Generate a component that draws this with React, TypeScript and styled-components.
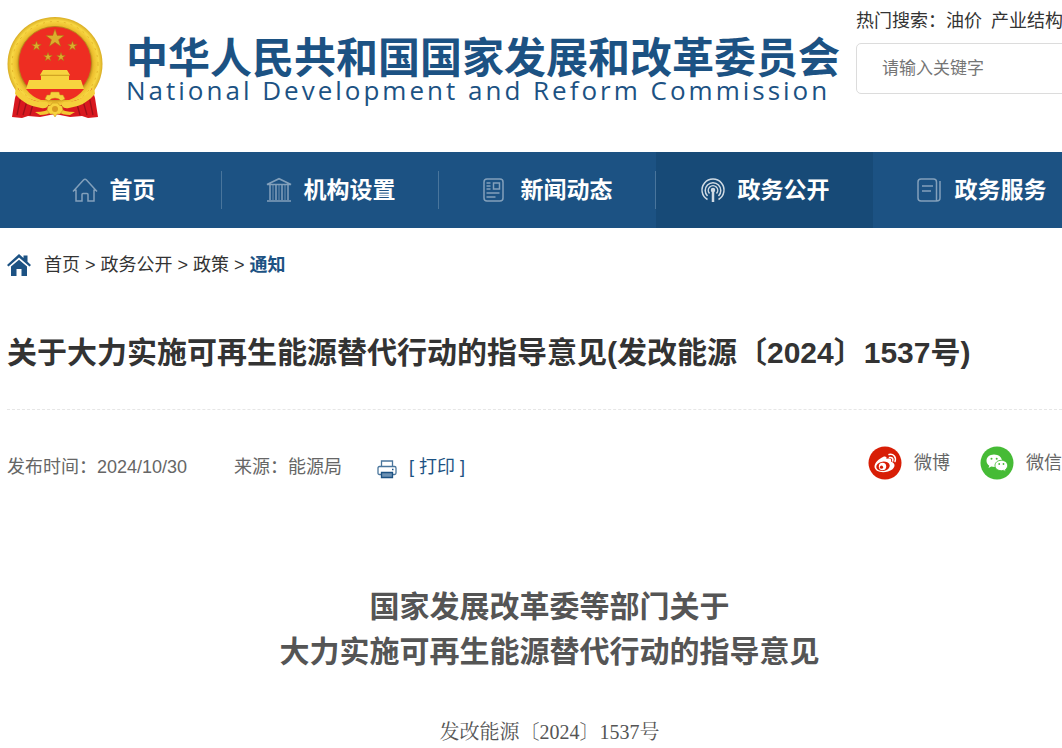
import React from 'react';
import styled, { createGlobalStyle } from 'styled-components';

const BLUE = '#1c5283';
const SANS = '"Liberation Sans", "Noto Sans CJK SC", sans-serif';

const GlobalStyle = createGlobalStyle`
  * { box-sizing: border-box; }
  body {
    margin: 0;
    background: #fff;
    color: #333;
    font: 18px/26px ${SANS};
    overflow-x: hidden;
  }
  a { color: inherit; text-decoration: none; }
  h1, h2, p { margin: 0; }
`;

const Page = styled.div`
  overflow: hidden;
`;

const Header = styled.header`
  display: flex;
  height: 152px;
  padding-left: 7px;
`;

const Brand = styled.a`
  display: flex;
  flex: none;
  align-items: flex-start;
  gap: 23px;
  width: 849px;
  padding-top: 16px;
  color: ${BLUE};
`;

const BrandText = styled.span`
  display: flex;
  flex-direction: column;
  padding-top: 16px;
  white-space: nowrap;
`;

const BrandName = styled.span`
  font: 700 42px/46px "Noto Sans CJK SC", sans-serif;
`;

const BrandEnglish = styled.span`
  font: 26px/24px "Open Sans", sans-serif;
  letter-spacing: 3px;
`;

const Search = styled.form`
  flex: none;
  width: 420px;
  padding-top: 8px;
`;

const HotWords = styled.div`
  display: flex;
  gap: 9px;
  white-space: nowrap;
`;

const SearchInput = styled.input`
  display: block;
  width: 100%;
  height: 51px;
  margin-top: 9px;
  padding: 0 25px;
  border: 1px solid #dcdcdc;
  border-radius: 5px;
  font: 17px/24px ${SANS};
  &::placeholder { color: #757575; opacity: 1; }
`;

const Nav = styled.nav`
  display: flex;
  height: 76px;
  padding-left: 5px;
  background: ${BLUE};
`;

const NavItem = styled.a<{ $active?: boolean }>`
  position: relative;
  display: flex;
  flex: none;
  align-items: center;
  justify-content: center;
  gap: 12px;
  width: 217px;
  background: ${(p) => (p.$active ? '#174a77' : 'transparent')};
  color: #fff;
  font-size: 23px;
  font-weight: 700;
  white-space: nowrap;
  svg { opacity: ${(p) => (p.$active ? 0.8 : 0.45)}; }
  &:not(:last-child)::after {
    content: '';
    position: absolute;
    top: 19px;
    right: 0;
    width: 1px;
    height: 38px;
    background: ${(p) => (p.$active ? 'transparent' : '#49759c')};
  }
`;

const Main = styled.main`
  padding-left: 7px;
`;

const Breadcrumb = styled.nav`
  display: flex;
  align-items: center;
  gap: 5px;
  padding-top: 24px;
  white-space: nowrap;
  svg { margin-right: 8px; }
`;

const Current = styled.a`
  color: ${BLUE};
  font-weight: 700;
`;

const Title = styled.h1`
  margin-top: 51px;
  padding-bottom: 32px;
  border-bottom: 1px dashed #e6e6e6;
  font-size: 30px;
  line-height: 48px;
  white-space: nowrap;
`;

const Meta = styled.div`
  display: flex;
  align-items: center;
  padding-top: 36px;
  color: #666;
  white-space: nowrap;
`;

const Published = styled.span`
  width: 227px;
  padding-top: 8px;
`;

const Source = styled.span`
  width: 143px;
  padding-top: 8px;
`;

const PrintButton = styled.button`
  display: flex;
  align-items: center;
  gap: 12px;
  padding: 8px 0 0;
  border: 0;
  background: none;
  color: ${BLUE};
  font: inherit;
  svg { margin-top: 4px; }
`;

const Share = styled.div`
  display: flex;
  gap: 30px;
  margin-left: auto;
`;

const ShareLink = styled.a`
  display: flex;
  align-items: center;
  gap: 12px;
  height: 34px;
`;

const Article = styled.article`
  padding-top: 104px;
  margin-left: 30px;
  text-align: center;
`;

const ArticleTitle = styled.h2`
  color: #555;
  font-size: 30px;
  line-height: 45px;
`;

const DocNumber = styled.p`
  margin-top: 44px;
  color: #555;
  font: 20px/28px "Liberation Serif", "Noto Serif CJK SC", "Noto Sans CJK SC", serif;
`;

const star = (cx: number, cy: number, r: number) =>
  Array.from({ length: 10 }, (_, i) => {
    const a = (Math.PI / 5) * i - Math.PI / 2;
    const k = i % 2 ? r * 0.4 : r;
    return `${(cx + k * Math.cos(a)).toFixed(1)},${(cy + k * Math.sin(a)).toFixed(1)}`;
  }).join(' ');

const Emblem = () => (
  <svg width="96" height="103" viewBox="0 0 96 103" aria-hidden="true">
    <defs>
      <radialGradient id="gold" cx="50%" cy="50%" r="50%">
        <stop offset="0.76" stopColor="#c2931c" />
        <stop offset="0.82" stopColor="#edbf2e" />
        <stop offset="0.92" stopColor="#f8d844" />
        <stop offset="1" stopColor="#d9ad24" />
      </radialGradient>
    </defs>
    <ellipse cx="48" cy="48" rx="47.500" ry="47" fill="url(#gold)" />
    <ellipse cx="48" cy="48" rx="43" ry="42.500" fill="none" stroke="#dfae26" strokeWidth="0.800" strokeDasharray="2 5" />
    <circle cx="48" cy="47" r="36.500" fill="#ee2d22" stroke="#b5851b" strokeWidth="0.800" />
    <g fill="#dcae2c" stroke="#a87513" strokeWidth="0.500">
      <polygon points={star(48, 22.5, 9.5)} />
      <polygon points={star(29.5, 30, 5)} />
      <polygon points={star(65.5, 30, 5)} />
      <polygon points={star(41, 41, 4.6)} />
      <polygon points={star(54, 41, 4.6)} />
    </g>
    <path d="M36 54h24l3 5H33zM34 59h28v5H34zM22 64h52l3 9H19z" fill="#f7d33f" />
    <path d="M33 59.300h30" stroke="#c99a1d" />
    <path d="M11 72q3 8 12 11l25 8 25-8q9-3 12-11l3 10 3 19-10 1-6-2-12 1-15-3-15 3-12-1-6 2-10-1 3-19z" fill="#d8181f" />
    <path d="M14 80l-4 19M20 85l-4 14M26 88l-3 11M82 80l4 19M76 85l4 14M70 88l3 11" stroke="#9e1018" strokeWidth="1.300" />
    <path d="M19 73h58q-6 8-15 11H34q-9-3-15-11z" fill="#ee2d22" />
    <path d="M9 70q10 15 27 16 6-1 5 4-2 3-7 2Q18 90 8 78zM87 70q-10 15-27 16-6-1-5 4 2 3 7 2 16-2 26-14z" fill="#f5cf3b" />
    <path d="M28 96q12 0 15-4h10q3 4 15 4l-5 3q-8 0-11-3h-8q-3 3-11 3z" fill="#f2c733" />
    <path d="M38 83l2-4h3l1-3h8l1 3h3l2 4-4 2q-2-3-6-3t-6 3z" fill="#f7d23d" stroke="#c28f18" strokeWidth="0.500" />
    <path d="M40 94l1-4 3-1 1-2h6l1 2 3 1 1 4-3 4h-3l-2 3-2-3h-3z" fill="#f7d23d" stroke="#c28f18" strokeWidth="0.500" />
    <circle cx="48" cy="93" r="3" fill="#d99c22" />
  </svg>
);

const line = { fill: 'none', stroke: 'currentColor', strokeWidth: 1.5 } as const;

const HomeOutline = () => (
  <svg width="26" height="26" viewBox="0 0 26 26" {...line} aria-hidden="true">
    <path d="M1 14.500 11.500 3Q13 1.500 14.500 3L25 14.500M4 12.500V24h6v-6.500q0-1 1-1h4q1 0 1 1V24h6V12.500" />
  </svg>
);

const Institution = () => (
  <svg width="26" height="26" viewBox="0 0 26 26" {...line} aria-hidden="true">
    <path d="M1 7.500 13 1.700l12 5.800zM4 8v15M10 8v15M16 8v15M22 8v15M1 24h24" />
    <path d="M7 8v15M13 8v15M19 8v15" strokeWidth="0.800" />
  </svg>
);

const News = () => (
  <svg width="26" height="26" viewBox="0 0 26 26" {...line} aria-hidden="true">
    <rect x="1" y="2" width="19" height="22" rx="3" />
    <path d="M3.500 6h4M3.500 9h4M3.500 12h4M3.500 16h13M3.500 20h9M10.500 6h6v6h-6z" />
  </svg>
);

const Broadcast = () => (
  <svg width="26" height="26" viewBox="0 0 26 26" {...line} aria-hidden="true">
    <path d="M7.500 22.500a11 11 0 1 1 11 0M7.500 19a7.800 7.800 0 1 1 11 0M9.500 16.500a4.700 4.700 0 1 1 7 0" />
    <circle cx="13" cy="13" r="1.500" fill="currentColor" />
    <path d="M13 13v12" strokeWidth="2.500" />
  </svg>
);

const Service = () => (
  <svg width="26" height="26" viewBox="0 0 26 26" {...line} aria-hidden="true">
    <path d="M19.500 24H4q-3 0-3-3V5q0-3 3-3h12.500q3 0 3 3zM19.500 24q3.500 0 3.500-3V4M5 9h11M5 14h9" />
  </svg>
);

const HomeSolid = () => (
  <svg width="24" height="22" viewBox="0 0 24 22" fill={BLUE} aria-hidden="true">
    <path d="M0 11 12 0l4.500 4V1.500h4v6.200L24 11l-1.500 1.500L12 3.500 1.500 12.500z" />
    <path d="M4 12.500 12 5.700l8 6.800V22h-5.500v-7h-5v7H4z" />
  </svg>
);

const Printer = () => (
  <svg width="20" height="20" viewBox="0 0 20 20" fill="none" stroke={BLUE} strokeWidth="1.300" aria-hidden="true">
    <path d="M4.500 7.500V2h11v5.500M4 15.500H2.500q-1.500 0-1.500-1.500V9q0-1.500 1.500-1.500h15Q19 7.500 19 9v5q0 1.500-1.500 1.500H16" opacity="0.800" />
    <path d="M4.500 13.500h11v5h-11z" fill="#6c91b3" />
    <path d="M15 10.500h1.500" />
  </svg>
);

const Weibo = () => (
  <svg width="34" height="34" viewBox="0 0 34 34" aria-hidden="true">
    <circle cx="17" cy="17" r="16.500" fill="#d81e06" />
    <path d="M15 11c2-1 4-.5 3.500 2 3-1 5.500-.5 4.500 2.500 6 2 4 8-3 10C13 27.500 6.500 25 6.500 20.500 6.500 17 11 12.500 15 11z" fill="#fff" />
    <ellipse cx="15" cy="20.300" rx="6.800" ry="4.700" fill="#d81e06" transform="rotate(-8 15 20.300)" />
    <circle cx="14.500" cy="20.500" r="3.700" fill="#fff" />
    <circle cx="13.500" cy="21.200" r="1.600" fill="#d81e06" />
    <path d="M21 8.500c4.500-1 7.500 2.500 6 7M21.500 11.500c2.500-.5 4 1 3.200 3.500" fill="none" stroke="#fff" strokeWidth="1.500" strokeLinecap="round" />
  </svg>
);

const Wechat = () => (
  <svg width="34" height="34" viewBox="0 0 34 34" aria-hidden="true">
    <circle cx="17" cy="17" r="16.500" fill="#46bb36" />
    <path d="M14 8.500c-4.500 0-7.500 2.800-7.500 6.300 0 2 1 3.700 2.800 4.900l-.8 2.400 2.800-1.500c1 .3 2 .4 3.200.4 4.500 0 7.500-2.800 7.500-6.200S18.500 8.500 14 8.500z" fill="#fff" />
    <path d="M21.300 14.300c-3.700 0-6.300 2.300-6.300 5.200s2.600 5.200 6.300 5.200c.8 0 1.600-.1 2.300-.3l2.400 1.300-.6-2.100c1.400-1 2.200-2.400 2.200-4.100 0-2.900-2.600-5.200-6.300-5.200z" fill="#fff" stroke="#46bb36" strokeWidth="0.900" />
    <g fill="#46bb36">
      <circle cx="11.500" cy="12.700" r="1" />
      <circle cx="16.700" cy="12.700" r="1" />
      <circle cx="19.200" cy="18" r="0.900" />
      <circle cx="23.500" cy="18" r="0.900" />
    </g>
  </svg>
);

const navItems = [
  { label: '首页', Icon: HomeOutline },
  { label: '机构设置', Icon: Institution },
  { label: '新闻动态', Icon: News },
  { label: '政务公开', Icon: Broadcast, active: true },
  { label: '政务服务', Icon: Service },
];

export default function App() {
  return (
    <Page>
      <GlobalStyle />
      <Header>
        <Brand href="#">
          <Emblem />
          <BrandText>
            <BrandName>中华人民共和国国家发展和改革委员会</BrandName>
            <BrandEnglish lang="en">National Development and Reform Commission</BrandEnglish>
          </BrandText>
        </Brand>
        <Search>
          <HotWords>
            <span>热门搜索：<a href="#">油价</a></span>
            <a href="#">产业结构</a>
          </HotWords>
          <SearchInput type="text" aria-label="搜索" placeholder="请输入关键字" />
        </Search>
      </Header>
      <Nav>
        {navItems.map(({ label, Icon, active }) => (
          <NavItem key={label} href="#" $active={active}>
            <Icon />
            {label}
          </NavItem>
        ))}
      </Nav>
      <Main>
        <Breadcrumb>
          <HomeSolid />
          <a href="#">首页</a>
          <span>&gt;</span>
          <a href="#">政务公开</a>
          <span>&gt;</span>
          <a href="#">政策</a>
          <span>&gt;</span>
          <Current href="#">通知</Current>
        </Breadcrumb>
        <Title>关于大力实施可再生能源替代行动的指导意见(发改能源〔2024〕1537号)</Title>
        <Meta>
          <Published>发布时间：2024/10/30</Published>
          <Source>来源：能源局</Source>
          <PrintButton type="button">
            <Printer />
            <span>[ 打印 ]</span>
          </PrintButton>
          <Share>
            <ShareLink href="#"><Weibo />微博</ShareLink>
            <ShareLink href="#"><Wechat />微信</ShareLink>
          </Share>
        </Meta>
        <Article>
          <ArticleTitle>
            国家发展改革委等部门关于
            <br />
            大力实施可再生能源替代行动的指导意见
          </ArticleTitle>
          <DocNumber>发改能源〔2024〕1537号</DocNumber>
        </Article>
      </Main>
    </Page>
  );
}
